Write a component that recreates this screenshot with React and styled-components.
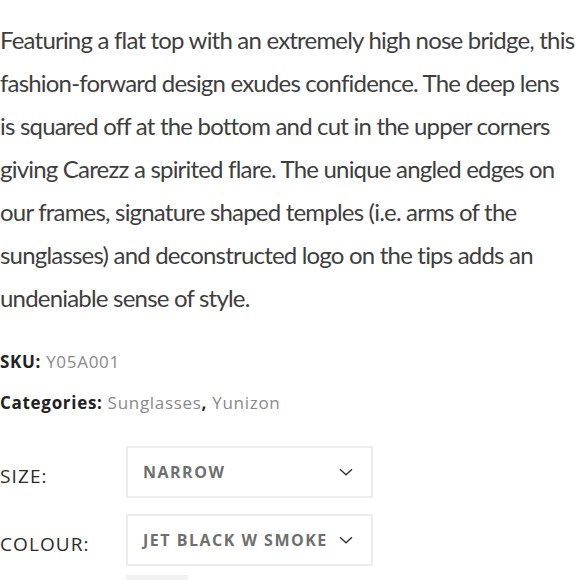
import styled, { createGlobalStyle } from "styled-components"

const GlobalStyle = createGlobalStyle`
  body {
    margin: 0;
    background: #ffffff;
    font-family: "Lato", "Open Sans", sans-serif;
  }
`

const Page = styled.div`
  display: flex;
  flex-direction: column;
  width: 580px;
  height: 580px;
  overflow: hidden;
`

const Description = styled.p`
  margin: 0;
  padding-top: 18px;
  width: 577px;
  font-family: "Lato", sans-serif;
  font-size: 24px;
  line-height: 43px;
  letter-spacing: -0.8px;
  color: #3e3e3e;
`

const Meta = styled.div`
  display: flex;
  flex-direction: column;
  gap: 16px;
  margin-top: 30px;
  font-family: "Open Sans", sans-serif;
  font-size: 17px;
  line-height: 25px;
  letter-spacing: 0.7px;
`

const MetaRow = styled.div`
  color: #8a8a8a;
`

const MetaLabel = styled.span`
  font-weight: 700;
  color: #222222;
  margin-right: 5px;
`

const Comma = styled.span`
  font-weight: 700;
  color: #222222;
`

const Options = styled.div`
  display: flex;
  flex-direction: column;
  gap: 16px;
  margin-top: 31px;
`

const OptionRow = styled.div`
  display: grid;
  grid-template-columns: 126px 247px;
  align-items: center;
`

const OptionLabel = styled.span`
  font-family: "Open Sans", sans-serif;
  font-size: 19px;
  font-weight: 400;
  letter-spacing: 1.1px;
  color: #2a2a2a;
  padding-top: 8px;
`

const Select = styled.div`
  display: flex;
  align-items: center;
  justify-content: space-between;
  box-sizing: border-box;
  height: 52px;
  padding: 0 18px 0 15px;
  border: 2px solid #ececec;
  font-family: "Open Sans", sans-serif;
  font-size: 16px;
  font-weight: 700;
  letter-spacing: 1.5px;
  color: #6f6f6f;
`

const Chevron = () => (
  <svg width="14" height="8" viewBox="0 0 14 8" fill="none">
    <path d="M1 1.2l6 5.6 6-5.6" stroke="#333" strokeWidth="1.4" />
  </svg>
)

const Stub = styled.div`
  margin-left: 126px;
  margin-top: 9px;
  width: 62px;
  height: 10px;
  background: #f2f2f2;
`

export default function App() {
  return (
    <Page>
      <GlobalStyle />
      <Description>
        Featuring a flat top with an extremely high nose bridge, this fashion-forward design exudes
        confidence. The deep lens is squared off at the bottom and cut in the upper corners giving
        Carezz a spirited flare. The unique angled edges on our frames, signature shaped temples
        (i.e. arms of the sunglasses) and deconstructed logo on the tips adds an undeniable sense
        of style.
      </Description>
      <Meta>
        <MetaRow>
          <MetaLabel>SKU:</MetaLabel>Y05A001
        </MetaRow>
        <MetaRow>
          <MetaLabel>Categories:</MetaLabel>Sunglasses<Comma>,</Comma> Yunizon
        </MetaRow>
      </Meta>
      <Options>
        <OptionRow>
          <OptionLabel>SIZE:</OptionLabel>
          <Select>
            NARROW
            <Chevron />
          </Select>
        </OptionRow>
        <OptionRow>
          <OptionLabel>COLOUR:</OptionLabel>
          <Select>
            JET BLACK W SMOKE
            <Chevron />
          </Select>
        </OptionRow>
      </Options>
      <Stub />
    </Page>
  )
}
